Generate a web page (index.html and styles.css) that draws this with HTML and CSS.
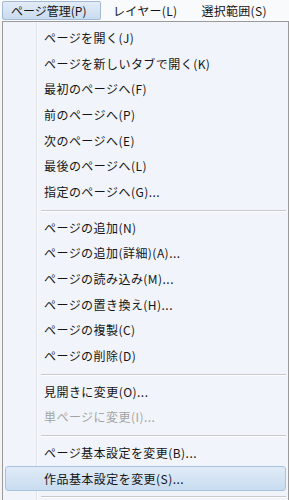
FILE: index.html
```html
<!DOCTYPE html>
<html>
<head>
	<meta charset="utf-8">
	<title>ページ管理</title>
	<link rel="stylesheet" href="styles.css">
</head>
<body>
<div class="menubar">
	<div class="top-item active">ページ管理(P)</div>
	<div class="top-item">レイヤー(L)</div>
	<div class="top-item">選択範囲(S)</div>
</div>
<div class="dropdown">
	<ul class="menu">
		<li class="item">ページを開く(J)</li>
		<li class="item">ページを新しいタブで開く(K)</li>
		<li class="item">最初のページへ(F)</li>
		<li class="item">前のページへ(P)</li>
		<li class="item">次のページへ(E)</li>
		<li class="item">最後のページへ(L)</li>
		<li class="item">指定のページへ(G)...</li>
		<li class="sep"></li>
		<li class="item">ページの追加(N)</li>
		<li class="item">ページの追加(詳細)(A)...</li>
		<li class="item">ページの読み込み(M)...</li>
		<li class="item">ページの置き換え(H)...</li>
		<li class="item">ページの複製(C)</li>
		<li class="item">ページの削除(D)</li>
		<li class="sep"></li>
		<li class="item">見開きに変更(O)...</li>
		<li class="item disabled">単ページに変更(I)...</li>
		<li class="sep"></li>
		<li class="item">ページ基本設定を変更(B)...</li>
		<li class="item hover">作品基本設定を変更(S)...</li>
		<li class="sep"></li>
	</ul>
</div>
</body>
</html>
```
FILE: styles.css
```css
html, body{
	margin: 0;
	padding: 0;
	height: 100%;
	overflow: hidden;
}
body{
	background: #f4f4f4;
	font-family: "Noto Sans CJK JP", "Noto Sans", sans-serif;
	font-size: 12px;
	letter-spacing: 0.45px;
	color: #141414;
}
/* メニューバー */
.menubar{
	display: flex;
	height: 21px;
	padding: 1px 0 0 2px;
	box-sizing: border-box;
	background: #f9fafc;
}
.top-item{
	height: 19px;
	line-height: 17px;
	padding: 0 11px;
	border: 1px solid transparent;
	box-sizing: border-box;
	white-space: nowrap;
	letter-spacing: 0.3px;
}
.top-item.active{
	width: 99px;
	padding: 0 8px;
	letter-spacing: 0;
	border-color: #a3b9d4;
	border-radius: 2px;
	background: linear-gradient(#e3ecf7, #c9dbef);
}
/* ドロップダウン */
.dropdown{
	margin-left: 2px;
	border: 1px solid #9a9a9a;
	border-bottom: none;
	height: 100%;
	background: #f1f5fb;
}
.menu{
	list-style: none;
	margin: 0;
	padding: 3px 2px 0 2px;
	background: linear-gradient(to right, transparent 33px, #e0e2e4 33px, #e0e2e4 34px, #fbfcfe 34px, #fbfcfe 35px, transparent 35px);
	height: 100%;
}
.item{
	height: 25.67px;
	line-height: 23px;
	padding-left: 38px;
	border: 1px solid transparent;
	box-sizing: border-box;
	white-space: nowrap;
}
.item.disabled{
	color: #a3a3a3;
}
.item.hover{
	border-color: #a8c3e0;
	border-radius: 3px;
	background: linear-gradient(#e0ebf7, #c8dcf0);
}
.sep{
	height: 10px;
	margin-left: 36px;
	background: linear-gradient(transparent 5px, #c7c9cc 5px, #c7c9cc 6px, #fdfdfe 6px, #fdfdfe 7px, transparent 7px);
}
```
